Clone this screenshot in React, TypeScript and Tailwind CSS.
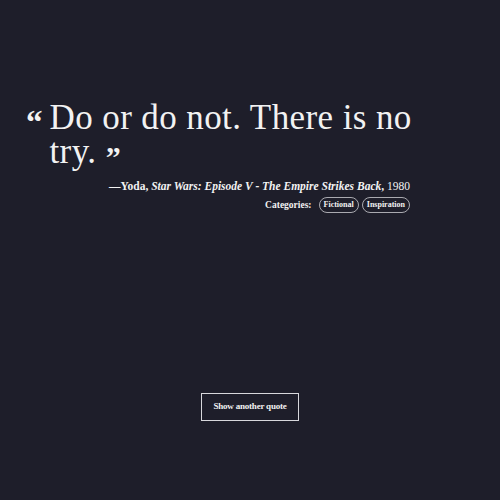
export default function App() {
  const serif = { fontFamily: '"Liberation Serif", "DejaVu Serif", serif' }
  return (
    <div className="h-[500px] w-[500px] bg-[#1e1e2a] text-[#f2f2f2]" style={serif}>
      <div className="flex flex-col pt-[101px]">
        <div className="ml-[26px]">
          <div className="flex w-[400px] items-start">
            <span className="mr-[7px] mt-[4px] text-[33px] font-bold leading-[34px]">“</span>
            <p className="text-[35px] leading-[34px] tracking-[0.4px]">
              Do or do not. There is no try.{" "}
              <span className="relative top-[4px] text-[30px] font-bold">”</span>
            </p>
          </div>
          <div className="mt-[8px] w-[384px] text-right text-[11.5px] font-bold leading-[16px]">
            —Yoda, <i>Star Wars: Episode V - The Empire Strikes Back</i>, <span className="font-normal">1980</span>
          </div>
          <div className="mt-[3px] flex w-[384px] items-center justify-end gap-[3px] text-[9.5px] font-bold">
            <span className="mr-[4px]">Categories:</span>
            <span className="rounded-full border border-[#aaaab0] px-[4px] py-[1px] text-[8px]">Fictional</span>
            <span className="rounded-full border border-[#aaaab0] px-[4px] py-[1px] text-[8px]">Inspiration</span>
          </div>
        </div>
        <div className="mt-[180px] flex justify-center">
          <button className="h-[28px] w-[98px] border border-[#d8d8dc] text-[9px] font-bold tracking-[-0.2px]">
            Show another quote
          </button>
        </div>
      </div>
    </div>
  )
}
